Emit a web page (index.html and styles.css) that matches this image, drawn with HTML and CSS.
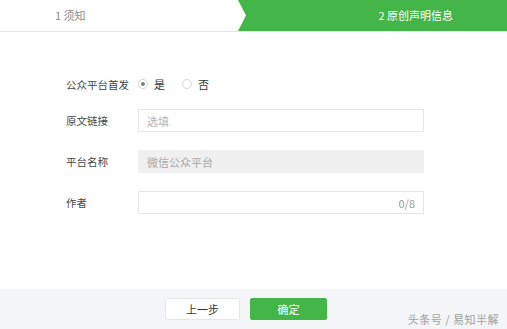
FILE: index.html
```html
<!DOCTYPE html>
<html lang="zh">
<head>
<meta charset="utf-8">
<title>原创声明信息</title>
<link rel="stylesheet" href="styles.css">
</head>
<body>
<div class="page">
  <header class="steps">
    <div class="step step-done">1 须知</div>
    <div class="step step-active">2 原创声明信息</div>
  </header>
  <main class="form">
    <div class="row row-radio">
      <span class="label">公众平台首发</span>
      <div class="radios">
        <span class="radio checked"></span><span class="radio-text">是</span>
        <span class="radio"></span><span class="radio-text">否</span>
      </div>
    </div>
    <div class="row">
      <span class="label">原文链接</span>
      <div class="input"><span class="placeholder">选填</span></div>
    </div>
    <div class="row">
      <span class="label">平台名称</span>
      <div class="input input-disabled"><span class="disabled-text">微信公众平台</span></div>
    </div>
    <div class="row">
      <span class="label">作者</span>
      <div class="input input-count"><span class="count">0/8</span></div>
    </div>
  </main>
  <footer class="footer">
    <button class="btn btn-default">上一步</button>
    <button class="btn btn-primary">确定</button>
    <span class="watermark">头条号 / 易知半解</span>
  </footer>
</div>
</body>
</html>
```
FILE: styles.css
```css
* { box-sizing: border-box; }
html, body { margin: 0; padding: 0; background: #fff; }
body {
  font-family: "Noto Sans CJK SC", "Microsoft YaHei", sans-serif;
  font-size: 11px;
  color: #353535;
}
.page {
  height: 329px;
  display: flex;
  flex-direction: column;
  position: relative;
}
.steps {
  display: flex;
  height: 32px;
  border-bottom: 1px solid #e7e7eb;
}
.step {
  height: 31px;
  line-height: 31px;
  font-size: 11px;
}
.step-done {
  width: 238px;
  padding-left: 55px;
  color: #8d8d8d;
}
.step-active {
  flex: 1;
  background: #44b549;
  color: #fff;
  text-align: right;
  padding-right: 54px;
  clip-path: polygon(0 0, 100% 0, 100% 100%, 0 100%, 8px 50%);
}
.form {
  flex: 1;
  padding: 41px 0 0 66px;
}
.row {
  display: flex;
  align-items: center;
  height: 23px;
  margin-bottom: 18px;
}
.row-radio {
  height: 22px;
  margin-bottom: 14px;
}
.label {
  width: 72px;
  font-size: 10.5px;
  color: #444;
}
.radios {
  display: flex;
  align-items: center;
}
.radio {
  width: 10px;
  height: 10px;
  border: 1px solid #d6d6d6;
  border-radius: 50%;
  margin-left: 0;
  position: relative;
}
.radio.checked {
  margin-left: 0;
}
.radio.checked::after {
  content: "";
  position: absolute;
  left: 2px;
  top: 2px;
  width: 4px;
  height: 4px;
  border-radius: 50%;
  background: #7d7d7d;
}
.radio-text {
  margin-left: 6px;
  margin-right: 17px;
  color: #353535;
}
.input {
  width: 286px;
  height: 23px;
  border: 1px solid #e4e8eb;
  display: flex;
  align-items: center;
  padding: 0 8px;
}
.placeholder { color: #b5b5b5; }
.input-disabled {
  background: #f0f0f0;
  border-color: #f0f0f0;
}
.disabled-text { color: #a8a8a8; }
.input-count { justify-content: flex-end; }
.count { color: #9a9a9a; }
.footer {
  height: 40px;
  background: #f4f5f7;
  display: flex;
  align-items: center;
  justify-content: center;
  gap: 10px;
  padding-right: 15px;
  position: relative;
}
.btn {
  height: 22px;
  border-radius: 2px;
  font-family: inherit;
  font-size: 11px;
  padding: 0;
  cursor: pointer;
}
.btn-default {
  width: 75px;
  background: #fff;
  border: 1px solid #e7e7eb;
  color: #353535;
}
.btn-primary {
  width: 77px;
  background: #44b549;
  border: 1px solid #44b549;
  color: #fff;
}
.watermark {
  position: absolute;
  right: 8px;
  top: 22px;
  font-size: 11px;
  color: #a0a0a0;
  letter-spacing: 0.5px;
}
```
